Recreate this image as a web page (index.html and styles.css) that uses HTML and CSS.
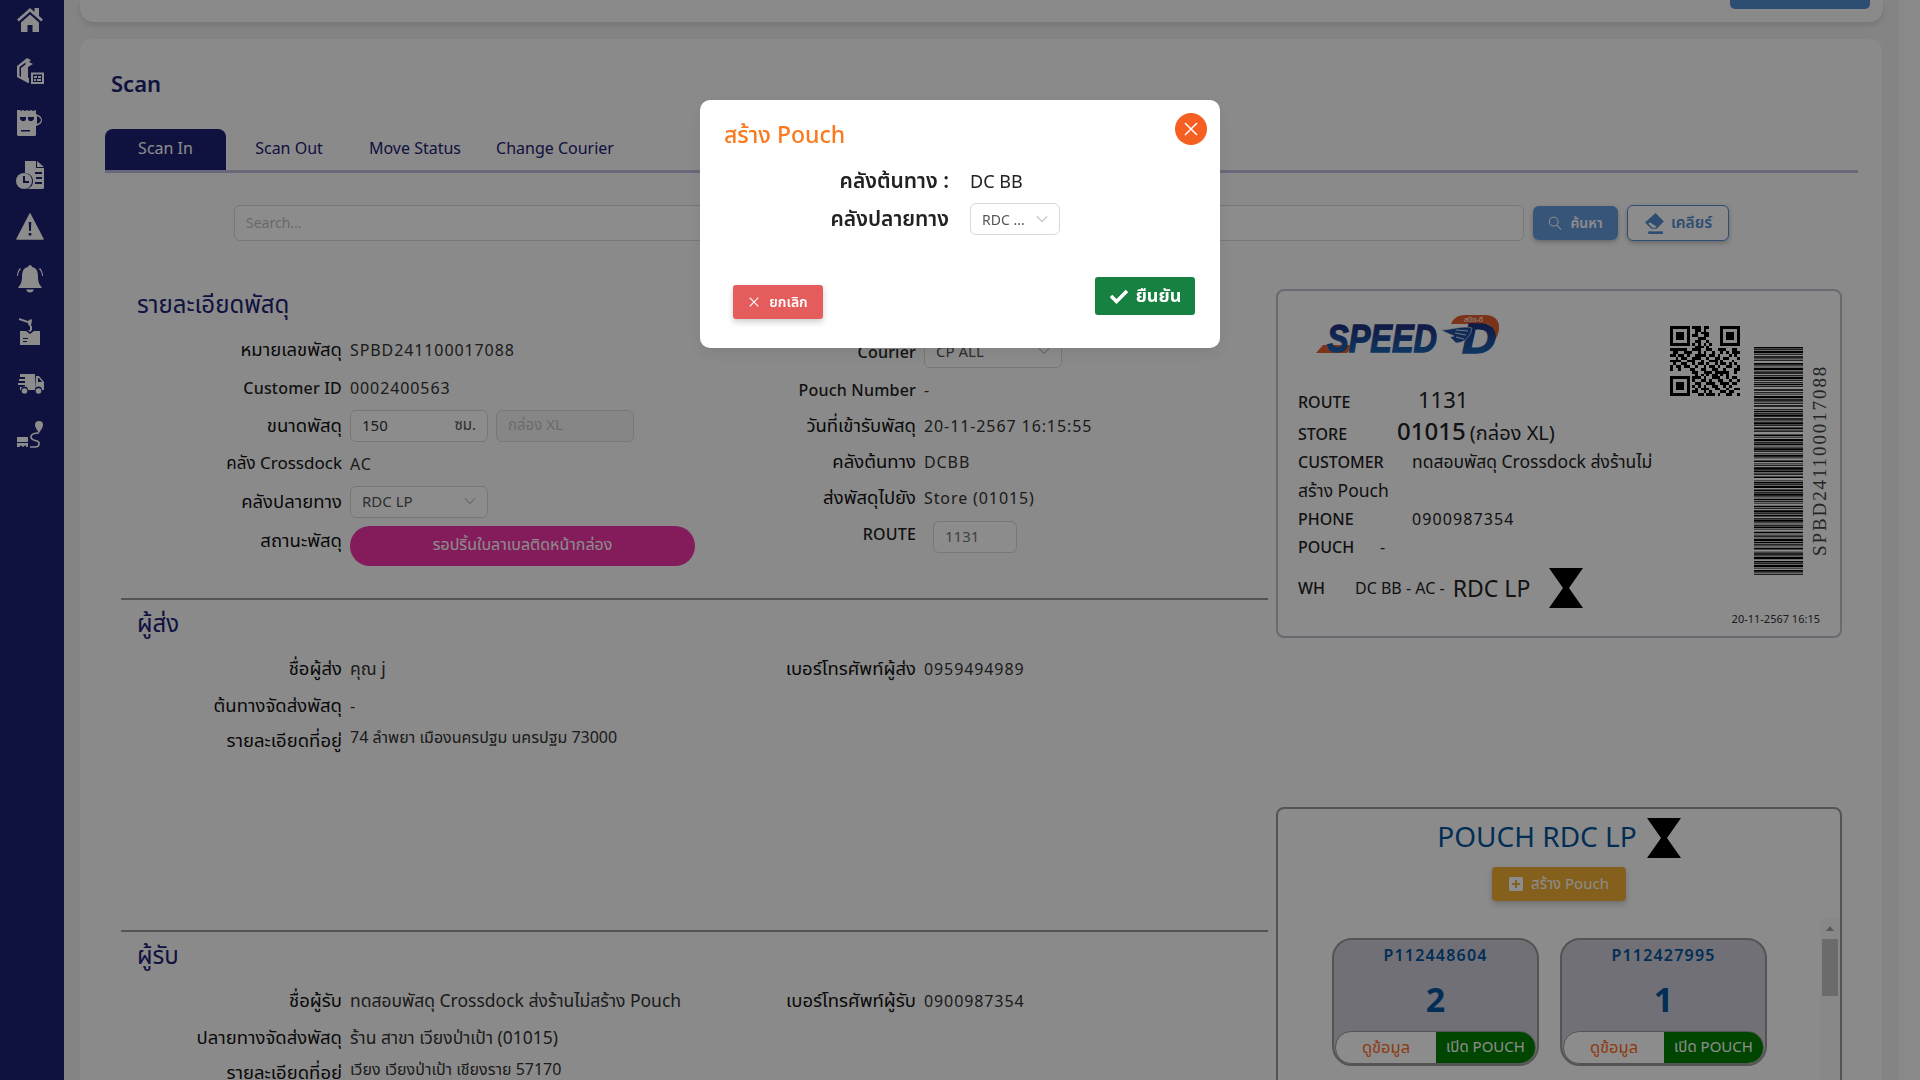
FILE: index.html
```html
<!DOCTYPE html>
<html lang="th">
<head>
    <meta charset="UTF-8">
    <meta name="viewport" content="width=device-width, initial-scale=1.0">
    <title>Scan</title>
    <link rel="stylesheet" href="styles.css">
</head>
<body>
  <div class="page">
    <nav class="sidebar">
      <svg class="nav-icon" viewBox="0 0 28 28"><path d="M14 3 1 14.500l1.800 2L14 6.700l11.200 9.800 1.800-2-4-3.500V3h-4.500v4z"/><path d="M5 17.500V27h6.500v-7h5v7H23v-9.500L14 9.500z"/></svg>
      <svg class="nav-icon" viewBox="0 0 28 28"><path d="M11 1 1 9v11l11 6h1v-5h-1V10l5-3-4-2 2-2zM3.500 10l6-4.500v2L5 11v9l-1.500-1z"/><path d="M15 15.500h13V27H15zm2 2v7.500h9v-7.500z"/><path d="M18 19h3v2h-3zm4 0h3v2h-3zm-4 3h2v2h-2zm3 0h4v2h-4z"/></svg>
      <svg class="nav-icon" viewBox="0 0 28 28"><path d="M1 1h3l1 1 2-1 2 1 2-1 2 1 2-1 2 1 3-1v4c3 1 6 3 6 6s-2 5-6 6v9l-1 1H2l-1-1zm20 6v8c2-1 4-2 4-4s-2-3-4-4zM4 8v2c2 3 5 3 6 0V8zm8 0v2c1 3 4 3 6 0V8zM5 21v1.500h9V21z" fill-rule="evenodd"/></svg>
      <svg class="nav-icon" viewBox="0 0 28 28"><path d="M9 0h11v7h8v20l-1 1H11c3-1 6-3 6-8 0-4-3-8-8-8z"/><path d="M21 0l7 6h-7z"/><path d="M19 11h7v2h-7zm1 5h6v2h-6zm-1 5h7v2h-7z" fill="#1d2173"/><circle cx="8" cy="20" r="8"/><path d="M7 15h2v5h4v2H7z" fill="#1d2173"/></svg>
      <svg class="nav-icon" viewBox="0 0 28 28"><path d="M14 1 1 26h26z" stroke="#fff" stroke-width="1.500" stroke-linejoin="round"/><path d="M12.700 9h2.600l-.4 9h-1.800zM12.700 20h2.600v2.600h-2.600z" fill="#1d2173"/></svg>
      <svg class="nav-icon" viewBox="0 0 28 28"><path d="M14 0c1 0 2 1 2 2 5 1 6 5 6 10 0 6 2 8 4 11H2c2-3 4-5 4-11 0-5 1-9 6-10 0-1 1-2 2-2zM10 24.500h8c-1 2-2 3-4 3s-3-1-4-3zM4 3 5 4C3 6 2 8 2 11H1c0-3 1-6 3-8zm20 0c2 2 3 5 3 8h-1c0-3-1-5-3-7z"/></svg>
      <svg class="nav-icon" viewBox="0 0 28 28"><path d="M3 1l9 3 3-2 1 1-1 6h-2l-1-3-9-3zM14 9h2v4l-2 2-2-2h2z"/><path d="M4 14h6l4 3 4-3h6v14H4zm3 7v1h5v-1zm0 3v1h4v-1z" fill-rule="evenodd"/></svg>
      <svg class="nav-icon" viewBox="0 0 28 28"><path d="M4 5h15v16h-7a3.500 3.500 0 0 0-7 0H4v-3h5v-2H2v-2h7v-2H3v-2h6V8H4zM20 7h3l5 6v8h-2a3.500 3.500 0 0 0-7 0zm2 2v4h4l-3-4z" fill-rule="evenodd"/><circle cx="8.500" cy="22" r="2.800"/><circle cx="22.500" cy="22" r="2.800"/></svg>
      <svg class="nav-icon" viewBox="0 0 28 28"><path d="M23 0a4 4 0 0 1 4 4c0 2-2 5-4 8-2-3-4-6-4-8a4 4 0 0 1 4-4z"/><path d="M23 12c-4 0-8 1-8 4s3 3 6 4 3 6-2 6h-5" fill="none" stroke="#fff" stroke-width="1.600"/><path d="M1 16h11v5H1zM1 22h11v4h-1.500a1.500 1.500 0 0 0-3 0h-1a1.500 1.500 0 0 0-3 0H1z"/></svg>
    </nav>

    <div class="content">
      <div class="top-card"><span class="top-button"></span></div>

      <main class="main-card">
        <h1 class="page-title">Scan</h1>

        <div class="tabs">
          <span class="tab tab-active">Scan In</span>
          <span class="tab tab-out">Scan Out</span>
          <span class="tab tab-move">Move Status</span>
          <span class="tab tab-courier">Change Courier</span>
        </div>

        <div class="search-row">
          <div class="search-input">Search...</div>
          <button class="btn-search">
            <svg class="btn-icon" viewBox="0 0 16 16" fill="none" stroke="currentColor" stroke-width="1.200"><circle cx="6.500" cy="6.500" r="5"/><path d="m10 10.500 5 5"/></svg>
            ค้นหา
          </button>
          <button class="btn-clear">
            <svg class="erase-icon" viewBox="0 0 20 20" fill="currentColor"><path d="M11 0l8 8-7 7H7L1 9zM6 9l-2 1 4 4h3l1-1z" fill-rule="evenodd"/><path d="M4 17.500h14V20H4z"/></svg>
            เคลียร์
          </button>
        </div>

        <div class="body-row">
          <div class="details">
            <section class="section section-parcel">
              <h2 class="section-title">รายละเอียดพัสดุ</h2>
              <div class="info-cols">
                <div class="info-col col-left">
                  <div class="info-row"><label class="th">หมายเลขพัสดุ</label><span>SPBD241100017088</span></div>
                  <div class="info-row"><label>Customer ID</label><span>0002400563</span></div>
                  <div class="info-row">
                    <label class="th">ขนาดพัสดุ</label>
                    <div class="field"><span>150</span><span class="unit">ซม.</span></div>
                    <div class="field field-disabled">กล่อง XL</div>
                  </div>
                  <div class="info-row"><label class="th-mix">คลัง Crossdock</label><span>AC</span></div>
                  <div class="info-row">
                    <label class="th">คลังปลายทาง</label>
                    <div class="field field-select">RDC LP
                      <svg class="chevron" viewBox="0 0 14 8"><path d="m1 1 6 6 6-6"/></svg>
                    </div>
                  </div>
                  <div class="info-row row-status">
                    <label class="th">สถานะพัสดุ</label>
                    <div class="status-pill">รอปริ้นใบลาเบลติดหน้ากล่อง</div>
                  </div>
                </div>
                <div class="info-col col-right col-parcel">
                  <div class="info-row">
                    <label>Courier</label>
                    <div class="field field-courier">CP ALL
                      <svg class="chevron" viewBox="0 0 14 8"><path d="m1 1 6 6 6-6"/></svg>
                    </div>
                  </div>
                  <div class="info-row"><label>Pouch Number</label><span>-</span></div>
                  <div class="info-row"><label class="th">วันที่เข้ารับพัสดุ</label><span>20-11-2567 16:15:55</span></div>
                  <div class="info-row"><label class="th">คลังต้นทาง</label><span>DCBB</span></div>
                  <div class="info-row"><label class="th">ส่งพัสดุไปยัง</label><span>Store (01015)</span></div>
                  <div class="info-row row-route"><label>ROUTE</label><div class="field field-route">1131</div></div>
                </div>
              </div>
            </section>

            <section class="section section-sender">
              <h2 class="section-title">ผู้ส่ง</h2>
              <div class="info-cols">
                <div class="info-col col-left col-person">
                  <div class="info-row"><label class="th">ชื่อผู้ส่ง</label><span class="th">คุณ j</span></div>
                  <div class="info-row"><label class="th">ต้นทางจัดส่งพัสดุ</label><span>-</span></div>
                  <div class="info-row row-address"><label class="th">รายละเอียดที่อยู่</label><span>74 ลำพยา เมืองนครปฐม นครปฐม 73000</span></div>
                </div>
                <div class="info-col col-right col-person">
                  <div class="info-row"><label class="th">เบอร์โทรศัพท์ผู้ส่ง</label><span>0959494989</span></div>
                </div>
              </div>
            </section>

            <section class="section section-receiver">
              <h2 class="section-title">ผู้รับ</h2>
              <div class="info-cols">
                <div class="info-col col-left col-person">
                  <div class="info-row"><label class="th">ชื่อผู้รับ</label><span class="th">ทดสอบพัสดุ Crossdock ส่งร้านไม่สร้าง Pouch</span></div>
                  <div class="info-row"><label class="th">ปลายทางจัดส่งพัสดุ</label><span class="th">ร้าน สาขา เวียงป่าเป้า (01015)</span></div>
                  <div class="info-row row-address"><label class="th">รายละเอียดที่อยู่</label><span>เวียง เวียงป่าเป้า เชียงราย 57170</span></div>
                </div>
                <div class="info-col col-right col-person">
                  <div class="info-row"><label class="th">เบอร์โทรศัพท์ผู้รับ</label><span>0900987354</span></div>
                </div>
              </div>
            </section>
          </div>

          <aside class="side">
            <div class="label-card">
              <div class="label-left">
                <svg class="logo" viewBox="0 0 185 40">
                  <defs>
                    <linearGradient id="speedFill" x1="0" y1="0" x2="0" y2="1">
                      <stop offset="0" stop-color="#20206f"/>
                      <stop offset="1" stop-color="#1872bd"/>
                    </linearGradient>
                  </defs>
                  <path d="M2 38 9 30h30l-6 8z" fill="#e0602e"/>
                  <path d="M137 9c2-5 6-9 14-9h20c11 0 15 7 14 15-1 4-2 7-4 10l-4-2c3-7 1-14-6-14z" fill="#e0602e"/>
                  <text x="13" y="37" class="logo-word" fill="url(#speedFill)" stroke="url(#speedFill)" stroke-width="1.400" textLength="110" lengthAdjust="spacingAndGlyphs">SPEED</text>
                  <text x="148" y="38" class="logo-d" fill="url(#speedFill)" stroke="url(#speedFill)" stroke-width="1.400" textLength="34" lengthAdjust="spacingAndGlyphs">D</text>
                  <path d="M127 15c10 0 22-5 31-2-1 8-7 15-16 15l-6-6 4-1-7-3z" fill="#1e4f9c" stroke="#fff" stroke-width=".6"/>
                  <path d="M142 15l12 1m-13 2 11 2m-10 2 8 2" stroke="#fff" stroke-width=".8" fill="none"/>
                  <text x="150" y="7" class="logo-small" fill="#fff">สปีด-ดี</text>
                </svg>

                <div class="label-line line-route"><b class="w-route">ROUTE</b><span class="big-route">1131</span></div>
                <div class="label-line line-store"><b class="w-store">STORE</b><span class="big-store">01015</span> <span class="store-box">(กล่อง XL)</span></div>
                <div class="label-text"><b class="w-customer">CUSTOMER</b><span class="label-name">ทดสอบพัสดุ Crossdock ส่งร้านไม่<br>สร้าง Pouch</span></div>
                <div class="label-line"><b class="w-customer">PHONE</b><span class="label-digits">0900987354</span></div>
                <div class="label-line"><b class="w-pouch">POUCH</b>-</div>
                <div class="label-line line-wh">
                  <b class="w-wh">WH</b><span class="wh-route">DC BB - AC - </span><span class="wh-dest">RDC LP</span>
                  <svg class="hourglass" viewBox="0 0 34 40"><path d="M0 0h34L20 20l14 20H0l14-20z"/></svg>
                </div>
              </div>

              <div class="label-right">
                <div class="codes">
                  <svg class="qr" viewBox="0 0 25 25" shape-rendering="crispEdges">
                    <path d="M0 0h7v7H0zm1 1v5h5V1zm1 1h3v3H2zM18 0h7v7h-7zm1 1v5h5V1zm1 1h3v3h-3zM0 18h7v7H0zm1 1v5h5v-5zm1 1h3v3H2z" fill-rule="evenodd"/>
                    <path fill="none" stroke="#000" d="M8 .5h3m1 0h2M9 1.500h2m1 0h1M9 2.500h1m1 0h3M8 3.500h2m2 0h2M10 4.500h3M9 5.500h2m2 0h1M8 6.500h1m1 0h1m1 0h1m1 0h1M9 7.500h3m1 0h1M0 8.500h6m2 0h3m2 0h2m2 0h3m2 0h2M1 9.500h2m2 0h3m2 0h1m1 0h1m2 0h1m2 0h1m1 0h1m1 0h3M0 10.500h2m1 0h2m1 0h1m2 0h4m1 0h2m1 0h1m3 0h1m1 0h1M2 11.500h1m1 0h2m2 0h3m2 0h1m2 0h2m1 0h2m3 0h2M0 12.500h4m2 0h3m2 0h1m2 0h3m1 0h1m3 0h1M1 13.500h1m2 0h2m2 0h1m1 0h2m1 0h1m2 0h1m1 0h2m1 0h1m1 0h1M0 14.500h1m1 0h2m1 0h2m2 0h1m2 0h1m1 0h2m1 0h1m2 0h2m2 0h1M0 15.500h1m2 0h1m3 0h2m2 0h2m2 0h2m2 0h1m3 0h2M8 16.500h2m2 0h3m1 0h5m2 0h1M9 17.500h1m1 0h1m1 0h1m1 0h2m1 0h1m1 0h1M8 18.500h3m1 0h1m2 0h3m2 0h1m1 0h2M8 19.500h1m2 0h2m1 0h1m2 0h2m2 0h1m2 0h1M9 20.500h2m2 0h3m2 0h3m1 0h2M8 21.500h1m1 0h1m1 0h1m2 0h2m2 0h1m1 0h1M9 22.500h1m1 0h3m2 0h2m2 0h1m2 0h2M8 23.500h2m2 0h1m1 0h1m3 0h2m1 0h2M10 24.500h2m1 0h3m1 0h1m2 0h2m2 0h1"/>
                  </svg>
                  <svg class="barcode" viewBox="0 0 49 300" preserveAspectRatio="none">
                    <line x1="24.500" y1="0" x2="24.500" y2="300" stroke="#000" stroke-width="49" stroke-dasharray="2 1 1 1 3 1 1 2 2 1 1 1 1 3 2 1 1 2 3 1 1 1 2 2 1 1 3 1 1 2 1 1 2 1 1 3 2 2 1 1 1 2 3 1 2 1 1 1 1 2 2 3 1 1 2 1 1 1 3 2"/>
                  </svg>
                  <div class="barcode-text">SPBD241100017088</div>
                </div>
                <div class="label-date">20-11-2567 16:15</div>
              </div>
            </div>

            <div class="pouch-card">
              <div class="pouch-head">
                <span class="pouch-title">POUCH RDC LP</span>
                <svg class="hourglass" viewBox="0 0 34 40"><path d="M0 0h34L20 20l14 20H0l14-20z"/></svg>
              </div>
              <button class="btn-pouch">
                <svg class="plus-icon" viewBox="0 0 14 14"><path d="M1 0h12l1 1v12l-1 1H1l-1-1V1zm5 3v3H3v2h3v3h2V8h3V6H8V3z" fill-rule="evenodd"/></svg>
                สร้าง Pouch
              </button>
              <div class="pouch-scroll">
                <div class="pouch-list">
                  <div class="pouch-item">
                    <div class="pouch-no">P112448604</div>
                    <div class="pouch-count">2</div>
                    <div class="pouch-actions"><span class="act-view">ดูข้อมูล</span><span class="act-open">เปิด POUCH</span></div>
                  </div>
                  <div class="pouch-item">
                    <div class="pouch-no">P112427995</div>
                    <div class="pouch-count">1</div>
                    <div class="pouch-actions"><span class="act-view">ดูข้อมูล</span><span class="act-open">เปิด POUCH</span></div>
                  </div>
                </div>
                <div class="fake-scroll"><i class="scroll-up"></i><i class="scroll-thumb"></i></div>
              </div>
            </div>
          </aside>
        </div>
      </main>
    </div>

    <div class="page-scrollbar"></div>
  </div>

  <div class="mask"></div>

  <div class="modal">
    <button class="modal-close">
      <svg viewBox="0 0 14 14"><path d="m1 1 12 12M13 1 1 13"/></svg>
    </button>
    <h3 class="modal-title">สร้าง Pouch</h3>
    <div class="modal-form">
      <div class="modal-row"><label>คลังต้นทาง :</label><span>DC BB</span></div>
      <div class="modal-row">
        <label>คลังปลายทาง</label>
        <div class="modal-select">RDC ...
          <svg class="chevron" viewBox="0 0 14 8"><path d="m1 1 6 6 6-6"/></svg>
        </div>
      </div>
    </div>
    <div class="modal-foot">
      <button class="btn-cancel">
        <svg viewBox="0 0 14 14"><path d="m2 2 10 10M12 2 2 12"/></svg>
        ยกเลิก
      </button>
      <button class="btn-ok">
        <svg viewBox="0 0 20 16"><path d="m2 8 5.500 5.500L18 3"/></svg>
        ยืนยัน
      </button>
    </div>
  </div>
</body>
</html>
```

FILE: styles.css
```css
* {
  box-sizing: border-box;
}
html, body {
  margin: 0;
  padding: 0;
  height: 100%;
  overflow: hidden;
}
body {
  font-family: "Noto Sans", "Noto Sans Thai", sans-serif;
  font-size: 16px;
  color: #333;
  background-color: #f1f1f1;
}
button {
  font-family: inherit;
  border: none;
  padding: 0;
}
.page {
  display: flex;
  height: 1080px;
  overflow: hidden;
}

/* sidebar */
.sidebar {
  width: 64px;
  flex: none;
  background-color: #1d2173;
  display: flex;
  flex-direction: column;
  align-items: center;
  padding: 5px 4px 0 0;
  gap: 24px;
}
.nav-icon {
  width: 28px;
  height: 28px;
  fill: #fff;
}

/* content */
.content {
  flex: 1;
  padding-left: 16px;
  min-width: 0;
}
.top-card {
  width: 1803px;
  height: 22px;
  background-color: #fcfcfc;
  border-radius: 0 0 14px 14px;
  box-shadow: 0 3px 6px rgba(0, 0, 0, 0.12);
  display: flex;
  justify-content: flex-end;
  padding-right: 13px;
}
.top-button {
  width: 140px;
  height: 9px;
  background-color: #558ccf;
  border-radius: 0 0 5px 5px;
}
.main-card {
  width: 1802px;
  margin-top: 17px;
  height: 1100px;
  background-color: #fbfbfb;
  border-radius: 12px;
  padding: 29px 24px 0 25px;
}
.page-title {
  margin: 0 0 0 6px;
  font-size: 22px;
  line-height: 30px;
  font-weight: 600;
  color: #1d2173;
}
.tabs {
  display: flex;
  margin-top: 31px;
  height: 44px;
  border-bottom: 3px solid #c0bdde;
}
.tab {
  height: 41px;
  line-height: 38px;
  text-align: center;
  color: #1d2173;
}
.tab-active {
  width: 121px;
  background-color: #1d2173;
  color: #fff;
  border-radius: 8px 8px 0 0;
}
.tab-out {
  width: 126px;
}
.tab-move {
  width: 126px;
}
.tab-courier {
  width: 154px;
}
.search-row {
  display: flex;
  gap: 9px;
  margin-top: 32px;
  margin-left: 129px;
  height: 36px;
}
.search-input {
  width: 1290px;
  border: 1px solid #d9d9d9;
  border-radius: 6px;
  padding: 0 11px;
  line-height: 34px;
  font-size: 14px;
  color: #bfbfbf;
  background-color: #fff;
}
.btn-search, .btn-clear {
  display: flex;
  align-items: center;
  justify-content: center;
  font-size: 14px;
  font-weight: 600;
  border-radius: 6px;
  box-shadow: 0 2px 5px rgba(0, 0, 0, 0.25);
}
.btn-search {
  width: 85px;
  margin: 1px 0;
  gap: 8px;
  background-color: #659bdc;
  color: #fff;
}
.btn-clear {
  width: 102px;
  gap: 6px;
  background-color: #fff;
  border: 1px solid #558ccf;
  color: #558ccf;
  font-size: 15.500px;
}
.btn-icon {
  width: 14px;
  height: 14px;
}
.erase-icon {
  width: 21px;
  height: 21px;
}

/* left details */
.body-row {
  display: flex;
  gap: 8px;
  margin-left: 16px;
}
.details {
  width: 1147px;
  flex: none;
}
.section-parcel {
  height: 357px;
  padding-top: 45px;
}
.section-sender {
  height: 332px;
  border-top: 2px solid #999;
  padding-top: 5px;
}
.section-receiver {
  border-top: 2px solid #999;
  padding-top: 5px;
}
.section-title {
  margin: 0 0 12px 16px;
  font-size: 24px;
  line-height: 36px;
  font-weight: 400;
  color: #1d2173;
}
.info-cols {
  display: flex;
}
.info-col {
  display: flex;
  flex-direction: column;
}
.col-left {
  width: 579px;
  gap: 6px;
}
.col-right {
  gap: 4px;
}
.col-parcel {
  padding-top: 2px;
}
.col-parcel .info-row:nth-child(2) {
  margin-top: 2px;
}
.col-person {
  padding-top: 0;
  gap: 5px;
}
.info-row {
  display: flex;
  align-items: center;
  gap: 8px;
  height: 32px;
  letter-spacing: 0.9px;
}
.info-row label {
  flex: none;
  text-align: right;
  color: #1f1f1f;
  font-weight: 500;
  letter-spacing: 0.2px;
}
.info-row .th {
  font-size: 17.500px;
  font-weight: 400;
  letter-spacing: 0;
}
.info-row label.th {
  font-size: 18.500px;
  color: #111;
}
.info-row label.th-mix {
  font-size: 17px;
  font-weight: 400;
  letter-spacing: 0;
  color: #111;
}
.col-left label {
  width: 221px;
}
.col-right label {
  width: 216px;
}
.field {
  display: flex;
  align-items: center;
  justify-content: space-between;
  width: 138px;
  height: 32px;
  padding: 0 11px 2px;
  border: 1px solid #d9d9d9;
  border-radius: 6px;
  background-color: #fff;
  font-size: 15px;
  letter-spacing: 0;
  position: relative;
}
.unit {
  color: #555;
}
.field-disabled {
  background-color: #f5f5f5;
  color: #c4c4c4;
}
.field-select {
  color: #555;
}
.field-courier {
  color: #555;
}
.field-route {
  width: 84px;
  margin-left: 9px;
  color: #777;
}
.chevron {
  width: 12px;
  height: 8px;
  fill: none;
  stroke: #bbb;
  stroke-width: 1.200;
}
.row-status {
  height: 40px;
  margin-top: 2px;
  align-items: flex-start;
}
.row-status label {
  margin-top: 1px;
}
.status-pill {
  width: 345px;
  height: 40px;
  border-radius: 20px;
  background-color: #f034a8;
  color: #fff;
  text-align: center;
  line-height: 36px;
  letter-spacing: 0;
  font-size: 16px;
}
.row-route {
  margin-top: 3px;
}
.row-route label {
  margin-top: -6px;
}
.row-address {
  margin-top: -2px;
}
.row-address span {
  font-size: 16px;
  letter-spacing: 0;
  margin-top: -6px;
}

/* shipping label */
.side {
  width: 566px;
  flex: none;
  padding-top: 48px;
}
.label-card {
  display: flex;
  height: 349px;
  border: 2px solid #bcc1cc;
  border-radius: 8px;
  background-color: #fdfdfd;
}
.label-left {
  width: 382px;
  padding: 24px 0 0 20px;
  flex: none;
  color: #222;
}
.label-left b {
  display: inline-block;
  font-weight: 500;
}
.logo {
  display: block;
  width: 185px;
  height: 40px;
  margin-left: 16px;
  margin-bottom: 30px;
}
.logo-word {
  font-family: "Liberation Sans", sans-serif;
  font-weight: 700;
  font-style: italic;
  font-size: 39px;
}
.logo-d {
  font-family: "Liberation Sans", sans-serif;
  font-weight: 700;
  font-style: italic;
  font-size: 42px;
}
.logo-small {
  font-size: 7px;
}
.label-line, .label-text {
  line-height: 28px;
  white-space: nowrap;
}
.line-route {
  height: 28px;
}
.line-store {
  margin-top: 4px;
  margin-bottom: 2px;
  height: 28px;
}
.line-wh {
  display: flex;
  align-items: center;
  height: 40px;
  margin-top: 7px;
  margin-bottom: 0;
}
.label-name {
  display: inline;
  font-size: 17.500px;
}
.label-digits {
  letter-spacing: 1.100px;
}
.w-route {
  width: 120px;
}
.w-store {
  width: 99px;
}
.w-customer {
  width: 114px;
}
.w-pouch {
  width: 82px;
}
.w-wh {
  width: 57px;
}
.big-route {
  font-size: 22px;
}
.big-store {
  font-size: 24px;
  font-weight: 500;
}
.store-box {
  font-size: 20px;
}
.wh-route {
  white-space: pre;
}
.wh-dest {
  font-size: 23px;
  margin-left: 4px;
}
.hourglass {
  width: 34px;
  height: 40px;
  flex: none;
  fill: #000;
}
.line-wh .hourglass {
  margin-left: 19px;
}
.label-right {
  flex: 1;
  margin-left: 10px;
  padding-top: 35px;
}
.codes {
  display: flex;
  height: 251px;
}
.qr {
  width: 70px;
  height: 70px;
  flex: none;
}
.barcode {
  width: 49px;
  height: 230px;
  margin-left: 14px;
  margin-top: 21px;
  flex: none;
}
.barcode-text {
  font-family: "Liberation Serif", serif;
  font-size: 19px;
  letter-spacing: 1.900px;
  line-height: 18px;
  writing-mode: vertical-rl;
  transform: rotate(180deg);
  margin-left: 8px;
  margin-top: 41px;
  height: 189px;
  white-space: nowrap;
  color: #444;
}
.label-date {
  margin-top: 34px;
  font-size: 11px;
  line-height: 16px;
  width: 150px;
  text-align: right;
  color: #333;
}

/* pouch panel */
.pouch-card {
  margin-top: 169px;
  height: 400px;
  border: 2px solid #999;
  border-radius: 8px;
  background-color: #fdfdfd;
  padding-top: 9px;
}
.pouch-head {
  display: flex;
  justify-content: center;
  align-items: center;
  gap: 10px;
  height: 40px;
}
.pouch-title {
  font-size: 28px;
  line-height: 36px;
  margin-top: -4px;
  color: #05549c;
}
.btn-pouch {
  display: flex;
  align-items: center;
  justify-content: center;
  gap: 8px;
  width: 134px;
  height: 34px;
  margin: 9px auto 0;
  border-radius: 4px;
  background-color: #f2af33;
  color: #fff;
  font-size: 15px;
  box-shadow: 0 3px 6px rgba(0, 0, 0, 0.2);
}
.plus-icon {
  width: 14px;
  height: 14px;
  fill: #fff;
}
.pouch-scroll {
  display: flex;
  margin-top: 17px;
  height: 300px;
}
.pouch-list {
  display: flex;
  gap: 21px;
  padding: 20px 0 0 54px;
  width: 542px;
}
.pouch-item {
  width: 207px;
  height: 128px;
  border: 2px solid #999;
  border-radius: 20px;
  background-color: #cccdd8;
  text-align: center;
  display: flex;
  flex-direction: column;
}
.pouch-no {
  margin-top: 3px;
  line-height: 24px;
  font-weight: 600;
  letter-spacing: 1.200px;
  color: #05549c;
}
.pouch-count {
  margin-top: 10px;
  font-size: 34px;
  line-height: 44px;
  font-weight: 700;
  color: #05549c;
}
.pouch-actions {
  display: flex;
  margin: auto 1px 0;
  height: 33px;
  border: 1px solid #999;
  border-radius: 16px;
  background-color: #fff;
  overflow: hidden;
  line-height: 29px;
  font-size: 15px;
}
.act-view {
  width: 100px;
  color: #ff6a1d;
  font-size: 16.500px;
}
.act-open {
  flex: 1;
  background-color: #008000;
  color: #fff;
}
.fake-scroll {
  width: 20px;
  background-color: #f8f8f8;
  padding: 0 2px;
}
.scroll-up {
  display: block;
  width: 0;
  height: 0;
  margin: 8px auto 0;
  border-left: 4px solid transparent;
  border-right: 4px solid transparent;
  border-bottom: 5px solid #a0a0a0;
}
.scroll-thumb {
  display: block;
  height: 57px;
  margin-top: 8px;
  background-color: #c4c4c4;
}
.page-scrollbar {
  width: 21px;
  flex: none;
  background-color: #fafafa;
}

/* modal */
.mask {
  position: fixed;
  inset: 0;
  background-color: rgba(0, 0, 0, 0.45);
}
.modal {
  position: fixed;
  left: 700px;
  top: 100px;
  width: 520px;
  height: 248px;
  background-color: #fff;
  border-radius: 10px;
  box-shadow: 0 6px 16px rgba(0, 0, 0, 0.08);
  padding: 17px 24px 0;
}
.modal-close {
  position: absolute;
  right: 13px;
  top: 13px;
  width: 32px;
  height: 32px;
  border-radius: 50%;
  background-color: #f55f22;
  display: flex;
  align-items: center;
  justify-content: center;
}
.modal-close svg {
  width: 14px;
  height: 14px;
  fill: none;
  stroke: #fff;
  stroke-width: 1.500;
}
.modal-title {
  margin: 0;
  font-size: 23px;
  line-height: 34px;
  font-weight: 500;
  color: #fa7a1e;
}
.modal-form {
  margin-top: 14px;
}
.modal-row {
  display: flex;
  align-items: center;
  gap: 21px;
  height: 32px;
  font-size: 18px;
  color: #222;
}
.modal-row + .modal-row {
  margin-top: 6px;
}
.modal-row label {
  width: 225px;
  text-align: right;
  font-size: 21px;
  font-weight: 600;
  white-space: nowrap;
}
.modal-select {
  display: flex;
  align-items: center;
  justify-content: space-between;
  width: 90px;
  height: 32px;
  padding: 0 11px;
  border: 1px solid #d9d9d9;
  border-radius: 6px;
  font-size: 14px;
  color: #555;
}
.modal-foot {
  display: flex;
  justify-content: space-between;
  align-items: flex-start;
  padding: 0 1px 0 9px;
  margin-top: 42px;
}
.btn-cancel {
  display: flex;
  align-items: center;
  justify-content: center;
  gap: 9px;
  width: 90px;
  height: 34px;
  margin-top: 8px;
  border-radius: 3px;
  background-color: #e55c5c;
  color: #fff;
  font-size: 14px;
  font-weight: 600;
  box-shadow: 0 3px 6px rgba(0, 0, 0, 0.2);
}
.btn-cancel svg {
  width: 12px;
  height: 12px;
  fill: none;
  stroke: #fff;
  stroke-width: 1.300;
}
.btn-ok {
  display: flex;
  align-items: center;
  justify-content: center;
  gap: 7px;
  width: 100px;
  height: 38px;
  border-radius: 3px;
  background-color: #168140;
  color: #fff;
  font-size: 18px;
  font-weight: 700;
}
.btn-ok svg {
  width: 20px;
  height: 16px;
  fill: none;
  stroke: #fff;
  stroke-width: 3.500;
}
```
